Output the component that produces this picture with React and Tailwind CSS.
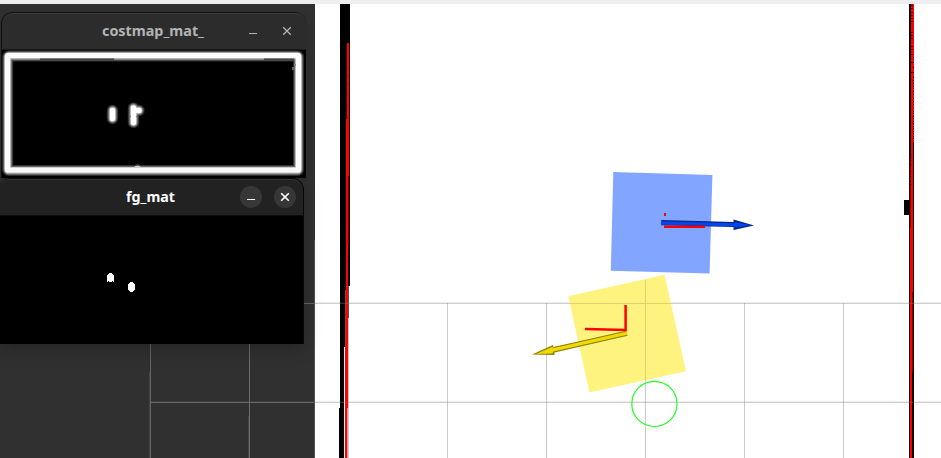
import React from "react";

const VERTICALS = [447, 546, 645, 744, 843];

// Scattered single-pixel gaps where laser returns miss the wall.
const LEFT_GAPS = [44, 47, 50, 53, 56, 58, 60, 62, 65, 67, 69, 75, 77, 82, 84, 91, 93, 95, 104, 106, 108];
const LEFT_LOW_GAPS = [230, 233, 236, 239, 242, 245, 248, 252, 255, 258];
const RIGHT_TOP_GAPS = [5, 8, 12, 15, 18, 21, 32, 35, 38, 46, 49, 54, 62, 72];
const RIGHT_EDGE_GAPS = [57, 62, 67, 72, 77, 80, 83, 86, 91, 94, 98, 101, 104, 111, 113, 116, 118, 121, 123, 126, 128, 131, 133, 136, 138];
const RIGHT_INNER_GAPS = [150, 153, 156, 158, 160, 163, 165, 171, 176, 181, 184];

function Gaps({ x, ys, w = 1, fill = "#000" }) {
  return ys.map((y) => <rect key={y} x={x} y={y} width={w} height="1" fill={fill} />);
}

function Scene() {
  return (
    <svg className="block h-[458px] w-[941px]" viewBox="0 0 941 458" shapeRendering="crispEdges">
      <rect width="941" height="458" fill="#fff" />
      <rect y="4" width="315" height="454" fill="#303030" />

      {/* map walls */}
      <path d="M340 4h10v282h-1v32h-1V348h-3v58h-1v52h-5v-50h1z" fill="#000" />
      <rect x="344" y="347" width="1" height="111" fill="#fff" />
      <rect x="348" y="286" width="1" height="32" fill="#555" />
      <rect x="348" y="318" width="1" height="140" fill="#c8c8c8" />
      <rect x="909" y="4" width="5" height="454" fill="#000" />
      <rect x="904" y="200" width="6" height="15" fill="#000" />

      {/* laser returns on both walls */}
      <rect x="347" y="43" width="2" height="76" fill="#f00" />
      <rect x="346" y="44" width="1" height="75" fill="#500000" />
      <Gaps x={346} ys={LEFT_GAPS} />
      <rect x="346" y="119" width="3" height="57" fill="#f00" />
      <rect x="346" y="176" width="2" height="282" fill="#f00" />
      <rect x="348" y="176" width="1" height="68" fill="#700000" />
      <Gaps x={348} ys={LEFT_LOW_GAPS} fill="#500000" />
      <rect x="345" y="290" width="1" height="58" fill="#a33" />
      <rect x="345" y="348" width="1" height="110" fill="#f00" />
      <rect x="347" y="408" width="1" height="50" fill="#d99" />
      <rect x="911" y="4" width="3" height="138" fill="#f00" />
      <rect x="911" y="142" width="2" height="316" fill="#f00" />
      <rect x="910" y="158" width="1" height="70" fill="#a00000" />
      <rect x="910" y="228" width="1" height="230" fill="#f00" />
      <rect x="912" y="292" width="1" height="80" fill="#900000" />
      <rect x="912" y="372" width="2" height="86" fill="#000" />
      <Gaps x={911} ys={RIGHT_TOP_GAPS} w={2} fill="#5a0000" />
      <Gaps x={913} ys={RIGHT_EDGE_GAPS} />
      <Gaps x={910} ys={RIGHT_INNER_GAPS} />

      {/* grid */}
      {VERTICALS.map((x) => (
        <rect key={x} x={x} y="303" width="1" height="155" fill="#cbcbcb" />
      ))}
      <g fill="#808080">
        <rect x="315" y="302" width="626" height="1" opacity="0.14" />
        <rect x="315" y="303" width="626" height="1" opacity="0.38" />
        <rect x="315" y="401" width="626" height="1" opacity="0.14" />
        <rect x="315" y="402" width="626" height="1" opacity="0.38" />
      </g>
      <rect x="304" y="303" width="11" height="1" fill="#666" />
      <rect x="150" y="402" width="165" height="1" fill="#686868" />
      <rect x="150" y="401" width="165" height="1" fill="#3d3d3d" />
      <rect x="150" y="344" width="1" height="114" fill="#646464" />
      <rect x="149" y="372" width="1" height="86" fill="#444" />
      <rect x="249" y="344" width="1" height="114" fill="#6c6c6c" />
      <rect x="248" y="416" width="1" height="42" fill="#444" />
      <rect x="314" y="240" width="1" height="218" fill="#505050" />

      {/* obstacle footprints */}
      <g shapeRendering="geometricPrecision">
        <path d="M613.3 172L712.4 175L709.6 273.5L610.8 270.8Z" fill="#82a5ff" />
        <path d="M568.2 296.2L664.6 274.8L686 371.2L589.4 392.6Z" fill="#fff380" />
        <g fill="none" stroke="#dfd26e" strokeWidth="1">
          <path d="M569.9 303.5H671M645.5 279.5V380" />
        </g>

        {/* blue heading arrow */}
        <path d="M661.3 220L733.5 222V219.6L754 225.4L733.5 230V227L661.3 225.2Z" fill="#00257f" />
        <path d="M661.6 221.2L734.5 223.2V222L751 225.3L734.5 227.8V226.3L661.6 224.8Z" fill="#0046ee" />
        <path d="M664 225.4H705V228H664Z" fill="#f00" />
        <path d="M664 213h2v3h-2z" fill="#f00" />

        {/* yellow heading arrow */}
        <path d="M626 330.8L627.6 335.8L554.5 352.4V355L532 354.5L553 345L553.3 347Z" fill="#8f8200" />
        <path d="M626.2 331.8L627.2 334.8L553.4 351.4L552.5 353.5L536 353.9L552 347L554 348Z" fill="#f0da00" />
        <path d="M585 329L625.6 330V305" fill="none" stroke="#f00" strokeWidth="2.5" />
      </g>

      <circle cx="654.4" cy="403.9" r="22.6" fill="none" stroke="#1aff1a" strokeWidth="1.15" shapeRendering="geometricPrecision" />

      <rect width="941" height="4" fill="#eee" />
    </svg>
  );
}

function WindowButton({ kind, active }) {
  return (
    <button
      className={
        active
          ? "flex size-[22px] items-center justify-center rounded-full bg-[#373737] text-white"
          : "flex size-[22px] items-center justify-center rounded-full text-[#b4b4b4]"
      }
      aria-label={kind}
    >
      <svg className="size-[22px]" viewBox="0 0 22 22" fill="none" stroke="currentColor" strokeWidth={active ? 1.6 : 1.3}>
        {kind === "close" ? <path d="M7.2 7.2l7.6 7.6M14.8 7.2l-7.6 7.6" /> : <path d="M7 13.5h8" strokeWidth="1" shapeRendering="crispEdges" />}
      </svg>
    </button>
  );
}

function TitleBar({ title, active }) {
  return (
    <header
      className={
        active
          ? "grid h-[36px] grid-cols-[1fr_auto_1fr] items-center rounded-t-[11px] border-t border-[#353535] bg-[#222222] pr-[7px] pb-[2px] text-white"
          : "grid h-[36px] grid-cols-[1fr_auto_1fr] items-center rounded-t-[11px] border-t border-[#3c3c3c] bg-[#2c2c2c] pr-[8px] pb-[2px] text-[#b4b4b4]"
      }
    >
      <span />
      <svg
        className={active ? "h-[22px] w-[50px] translate-x-[3px]" : "h-[22px] w-[103px] translate-x-[3px]"}
        fill="currentColor"
      >
        <text
          x="0"
          y="16"
          textLength={active ? 49 : 102}
          lengthAdjust="spacingAndGlyphs"
          className="font-['Noto_Sans',sans-serif] text-[14.5px] font-bold"
        >
          {title}
        </text>
      </svg>
      <div className="flex justify-end gap-[12px]">
        <WindowButton kind="minimize" active={active} />
        <WindowButton kind="close" active={active} />
      </div>
    </header>
  );
}

function Costmap() {
  const blobs = "M112.5 110.5V118.5M133.5 108V122.5M134 110.5H139";
  return (
    <svg className="block h-[128px] w-[304px]" viewBox="2 50 304 128">
      <rect x="2" y="50" width="304" height="128" fill="#000" />
      {/* inflation gradient around the walls */}
      <g fill="none">
        <rect x="7.7" y="56" width="290.8" height="114.5" rx="1" stroke="#303030" strokeWidth="11" />
        <rect x="7.7" y="56" width="290.8" height="114.5" rx="1" stroke="#666" strokeWidth="9" />
        <rect x="7.7" y="56" width="290.8" height="114.5" rx="1" stroke="#a0a0a0" strokeWidth="7.2" />
        <rect x="7.5" y="55.5" width="291" height="114.8" rx="1" stroke="#fcfcfc" strokeWidth="5.6" />
      </g>
      <path d="M40 59.4H114M264 59.4H294" stroke="#444" strokeWidth="2" />
      <path d="M8 172.5H299" stroke="#e4e4e4" />
      <rect x="294" y="64" width="2" height="2" fill="#888" />
      <rect x="292" y="67" width="3" height="3" fill="#666" />
      <path d="M134.5 167.7v-1.2q3-2 6 0v1.2z" fill="#ccc" />
      <path d="M135 165.2q2.5-2 5 0" fill="none" stroke="#444" strokeWidth="0.8" />
      <g fill="none" strokeLinecap="round" strokeLinejoin="round">
        <path d={blobs} stroke="#2b2b2b" strokeWidth="11.5" />
        <path d={blobs} stroke="#606060" strokeWidth="9.5" />
        <path d={blobs} stroke="#a0a0a0" strokeWidth="7.3" />
        <path d={blobs} stroke="#fff" strokeWidth="5.5" />
      </g>
      <path d="M129.5 116.5h1.5M136 116.5h1.5" stroke="#777" />
    </svg>
  );
}

function Foreground() {
  return (
    <svg className="block h-[128px] w-[304px]" viewBox="-1 216 304 128" shapeRendering="crispEdges">
      <rect x="-1" y="216" width="304" height="128" fill="#000" />
      <path d="M109 273h3v1h1v1h1v7h-1v-1h-1v1h-3v-1h-1v1h-1v-7h1v-1h1z" fill="#fff" />
      <path d="M130 282h3v1h1v1h1v6h-1v1h-1v1h-3v-1h-1v-1h-1v-6h1v-1h1z" fill="#fff" />
    </svg>
  );
}

export default function App() {
  return (
    <main className="relative h-[458px] w-[941px] overflow-hidden bg-white">
      <Scene />
      <section className="absolute top-[12px] left-px w-[305px] rounded-t-[12px] border-t border-l border-[#111] bg-black shadow-[0_2px_8px_rgba(0,0,0,0.14)]">
        <TitleBar title="costmap_mat_" active={false} />
        <div className="border-t border-[#191919]">
          <Costmap />
        </div>
      </section>
      <section className="absolute top-[178px] left-[-1px] w-[305px] rounded-t-[12px] border-t border-r border-[#080808] bg-black shadow-[0_5px_18px_rgba(0,0,0,0.24)]">
        <TitleBar title="fg_mat" active />
        <div className="border-t border-[#0b0b0b]">
          <Foreground />
        </div>
      </section>
    </main>
  );
}
